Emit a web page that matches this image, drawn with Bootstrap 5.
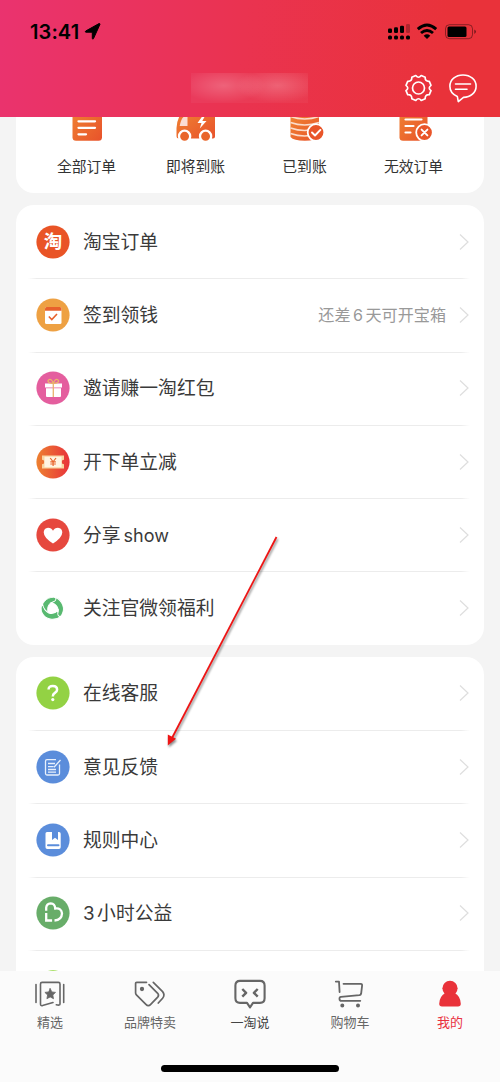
<!DOCTYPE html>
<html lang="zh-CN">
<head>
<meta charset="utf-8">
<meta name="viewport" content="width=device-width, initial-scale=1">
<title>我的</title>
<link href="https://cdn.jsdelivr.net/npm/bootstrap@5.3.0/dist/css/bootstrap.min.css" rel="stylesheet">
<style>
body{font-family:Inter,"Noto Sans CJK SC",sans-serif;background:#f4f4f4;color:#333;}
.screen{width:500px;height:1082px;}
.top-area{height:117px;background:linear-gradient(98deg,#ea336f 0%,#ea3350 48%,#e9323a 88%);}
.status-row{height:63px;padding:0 23px 0 30px;}
.clock{font-size:20px;font-weight:600;color:#000;line-height:1;letter-spacing:.1px;padding-top:1px;}
.title-row{height:54px;padding:0 22px 4px 191px;}
.title-blur{width:117px;height:30px;background:radial-gradient(ellipse 42px 17px at 28% 42%,rgba(255,255,255,.2),transparent),radial-gradient(ellipse 42px 17px at 74% 42%,rgba(255,255,255,.2),transparent),rgba(255,255,255,.045);}
.content{padding:0 16px;min-height:0;}
.panel{border:0;border-radius:18px;background:#fff;}
.panel + .panel{margin-top:12px;}
.orders{height:76px;padding:0 16px;border-radius:0 0 18px 18px;}
.orders span{font-size:14.8px;line-height:20px;margin-top:16px;}
.entry{height:73.3px;padding:0 14px 0 19.5px;font-size:18.8px;line-height:28px;color:#3a3a3a;border:0;background:transparent;}
.entry + .entry{background:linear-gradient(90deg,transparent,#ececec 2%,#ececec 98%,transparent) 12px 0/442px 1px no-repeat;}
.entry .name{margin-left:13.5px;padding-top:2px;}
.gap-latin{margin-left:3px;font-size:18px;}
.hint{font-size:16.1px;color:#999;margin-right:12px;padding-top:1px;}
.bottom-bar{height:111px;background:#fbfbfb;}
.tab{width:100px;padding-top:8px;font-size:13px;line-height:18px;color:#666;}
.tab span{margin-top:4px;}
.tab.talk{color:#444}.tab.active{color:#e9323f}
.home-line{width:178px;height:6.5px;background:#000;margin-bottom:10.5px;}
svg{display:block;flex:none}
.pointer-arrow{left:155px;top:525px;filter:drop-shadow(1px 2px 1px rgba(0,0,0,.45));}
</style>
</head>
<body>
<svg width="0" height="0" class="position-absolute"><defs>
  <linearGradient id="amber" x1="0" y1="0" x2="1" y2="1"><stop stop-color="#f08532"/><stop offset="1" stop-color="#e8522b"/></linearGradient>
  <linearGradient id="flame"><stop stop-color="#ed8130"/><stop offset="1" stop-color="#e8323b"/></linearGradient>
  <path id="chev" d="m2 1.500 8 7.500-8 7.500" fill="none" stroke="#dedede" stroke-width="1.200"/>
  <path id="blade" d="M-11 3C-12-5-6-11.500 1-11.200Q6.500-11 9-6.300 3-8.500-2-5.500-6-2-4.500 4-9-.5-11 3z"/>
</defs></svg>
<div class="screen position-relative d-flex flex-column overflow-hidden">
<header class="top-area flex-shrink-0">
  <div class="status-row d-flex align-items-center justify-content-between">
    <div class="d-flex align-items-center">
      <span class="clock">13:41</span>
      <svg style="margin-left:5px" width="17" height="17" viewBox="0 0 17 17"><path d="M16 1.200 9.500 15.600q-.8 1.200-1.200-.2V9.200H1.900q-1.300-.4-.2-1.200L15 .6q1-.2 1 .6z" stroke="#000" stroke-linejoin="round"/></svg>
    </div>
    <svg width="92" height="18" viewBox="0 0 92 18">
      <g><rect x="3" y="5.500" width="4" height="4.500" rx="1.300"/><rect x="9" y="4.200" width="4" height="5.800" rx="1.300"/><rect x="15" y="2.800" width="4" height="7.200" rx="1.300"/><rect x="21" y="1" width="4" height="9" rx="1.300" opacity=".25"/>
      <rect x="3" y="12.500" width="4" height="4" rx="1.500"/><rect x="9" y="12.500" width="4" height="4" rx="1.500"/><rect x="15" y="12.500" width="4" height="4" rx="1.500"/><rect x="21" y="12.500" width="4" height="4" rx="1.500"/></g>
      <g fill="none" stroke="#000" stroke-width="2.900"><path d="M32.800 6.200Q42 -2 51.200 6.200"/><path d="M36 10Q42 4.800 48 10"/></g><path d="M38.700 12.700Q42 10 45.300 12.700L42 16z"/>
      <rect x="60.500" y="1.700" width="27" height="14" rx="4" fill="none" stroke="#000" stroke-opacity=".4"/><rect x="62.500" y="3.500" width="19" height="10.500" rx="1.500"/><path d="M89.300 6.500q3.400 2.200 0 4.400z" opacity=".5"/>
    </svg>
  </div>
  <div class="title-row d-flex align-items-center">
    <div class="title-blur"></div>
    <div class="d-flex ms-auto align-items-center gap-3">
      <svg width="28" height="28" viewBox="-14.500 -14 28 28" fill="none" stroke="#fff" stroke-width="1.700" stroke-linejoin="round"><circle r="6"/><path d="M-2.700-12.500Q0-9 2.700-12.500L6.700-10.800Q6.400-6.400 10.800-6.700L12.500-2.700Q9 0 12.500 2.700L10.800 6.700Q6.400 6.400 6.700 10.800L2.700 12.500Q0 9-2.700 12.500L-6.700 10.800Q-6.400 6.400-10.800 6.700L-12.500 2.700Q-9 0-12.500-2.700L-10.800-6.700Q-6.400-6.400-6.700-10.800Z"/></svg>
      <svg width="30" height="30" viewBox="0 0 30 30" fill="none" stroke="#fff" stroke-width="1.600" stroke-linejoin="round" stroke-linecap="round"><path d="M9.300 23.400C4.800 21.500 1.900 17.500 1.900 13.200 1.900 6.800 7.500 2 15 2s13.100 4.800 13.100 11.200S22.500 24.400 15.500 24.400L10.300 28.600Z"/><path d="M7.500 11h15M7.500 16.200h11.500"/></svg>
    </div>
  </div>
</header>

<main class="content flex-grow-1 overflow-hidden">
  <section class="panel orders d-flex">
    <div class="flex-fill w-25 d-flex flex-column align-items-center">
      <svg width="44" height="24" viewBox="0 0 44 24"><rect x="7.500" y="-12" width="29.500" height="35.700" rx="3.500" fill="url(#amber)"/><path d="M13.500 4.300h16.500M13.500 10.800h16.500M13.500 17.300h7.500" stroke="#fff" stroke-width="2.300" stroke-linecap="round"/></svg>
      <span>全部订单</span></div>
    <div class="flex-fill w-25 d-flex flex-column align-items-center">
      <svg width="44" height="24" viewBox="0 0 44 24"><path d="M15-8H38q3 0 3 3V19.500q0 2-2 2H5q-2.500 0-2.500-2.500V11Q3 2 7-3 9-8 15-8z" fill="url(#amber)"/><path d="M13.500 0V9H5.700Q7 2 9.500 0z" fill="#fbdcd2"/><path d="M28.500-1 23.500 6h4l-1.700 5.500L32.500 4h-4.200L31-1z" fill="#fff"/><g fill="#e9662c" stroke="#fff" stroke-width="2.300"><circle cx="10.600" cy="19.300" r="5.600"/><circle cx="31.600" cy="19.300" r="5.600"/></g></svg>
      <span>即将到账</span></div>
    <div class="flex-fill w-25 d-flex flex-column align-items-center">
      <svg width="44" height="24" viewBox="0 0 44 24"><path d="M7.500-2H36V20q-3 3.800-14.200 3.800T7.500 20z" fill="url(#amber)"/><path d="M7.500-.5q14 5 28.500 0M7.500 5.500q14 5 28.500 0M7.500 11q14 5 28.500 0M7.500 16.500q14 5 28.500 0" fill="none" stroke="#fbdccb" stroke-width="1.700"/><circle cx="33" cy="15.500" r="8.300" fill="#e95529" stroke="#fff" stroke-width="1.800"/><path d="m29 15.500 3 3 5.400-5.600" fill="none" stroke="#fff" stroke-width="1.900" stroke-linecap="round" stroke-linejoin="round"/></svg>
      <span>已到账</span></div>
    <div class="flex-fill w-25 d-flex flex-column align-items-center">
      <svg width="44" height="24" viewBox="0 0 44 24"><rect x="7.500" y="-12" width="28" height="35.700" rx="3.500" fill="url(#amber)"/><path d="M13.500 2.500h16M13.500 9h8M13.500 15.500h5" stroke="#fff" stroke-width="2.200" stroke-linecap="round"/><circle cx="32.500" cy="15.500" r="8.300" fill="#e95529" stroke="#fff" stroke-width="1.800"/><path d="m29.600 12.600 5.800 5.800m0-5.800-5.800 5.800" stroke="#fff" stroke-width="1.900" stroke-linecap="round"/></svg>
      <span>无效订单</span></div>
  </section>

  <section class="panel list-group">
    <div class="entry list-group-item d-flex align-items-center"><svg width="34" height="34"><circle cx="17" cy="17" r="16.600" fill="#e95426"/><text x="17" y="23.400" font-size="18.500" font-weight="700" fill="#fff" text-anchor="middle" font-family="Noto Sans CJK SC">淘</text></svg><span class="name">淘宝订单</span><svg class="ms-auto" width="12" height="18"><use href="#chev"/></svg></div>
    <div class="entry list-group-item d-flex align-items-center"><svg width="34" height="34"><circle cx="17" cy="17" r="16.600" fill="#eea143"/><rect x="9" y="9" width="16.500" height="17" rx="1.500" fill="#fff"/><path d="M9 12.700V10.500Q9 9 10.500 9H24q1.500 0 1.500 1.500v2.200z" fill="#e8612c"/><path d="m12.800 18.500 3 3 5.200-5.500" fill="none" stroke="#e8612c" stroke-width="1.600"/></svg><span class="name">签到领钱</span><span class="hint ms-auto">还差<span style="margin:0 2.500px">6</span>天可开宝箱</span><svg width="12" height="18"><use href="#chev"/></svg></div>
    <div class="entry list-group-item d-flex align-items-center"><svg width="34" height="34"><circle cx="17" cy="17" r="16.600" fill="#e45e9e"/><path d="M9 12.500h17v4H9zM10 17.300h15V25q0 1-1 1H11q-1 0-1-1z" fill="#fff"/><path d="M17.300 26V12.500C13 12.500 10.800 10.500 12.600 8.900s4 .5 4.700 3.600c.7-3.100 2.900-5.200 4.700-3.600s-.4 3.600-4.700 3.600" fill="none" stroke="#e9b36d" stroke-width="1.300"/></svg><span class="name">邀请赚一淘红包</span><svg class="ms-auto" width="12" height="18"><use href="#chev"/></svg></div>
    <div class="entry list-group-item d-flex align-items-center"><svg width="34" height="34"><circle cx="17" cy="17" r="16.600" fill="url(#flame)"/><path d="M6 10.500h22v4.200a2.300 2.300 0 0 0 0 4.600v4.200H6v-4.200a2.300 2.300 0 0 0 0-4.600z" fill="#f9d5a1"/><path d="M8.500 11.700h17v10.600h-17z" fill="#fff4e2"/><path d="m14.200 13 2.900 3.800L20 13M17.100 16.800V21M14.300 16.800h5.600M14.300 19h5.600" stroke="#e9672f" stroke-width="1.200" fill="none"/></svg><span class="name">开下单立减</span><svg class="ms-auto" width="12" height="18"><use href="#chev"/></svg></div>
    <div class="entry list-group-item d-flex align-items-center"><svg width="34" height="34"><circle cx="17" cy="17" r="16.600" fill="#e6483e"/><path d="M17 25.500Q7.700 19.500 7.700 14.200 8 10 12 9.700q3.500 0 5 3 1.500-3 5-3 4 .3 4.300 4.500 0 5.300-9.300 11.300z" fill="#fff"/></svg><span class="name">分享<span class="gap-latin">show</span></span><svg class="ms-auto" width="12" height="18"><use href="#chev"/></svg></div>
    <div class="entry list-group-item d-flex align-items-center"><svg width="34" height="34"><g transform="translate(16.500 17.500)" fill="#58b970" stroke="#fff" stroke-width=".9"><use href="#blade"/><use href="#blade" transform="rotate(120)"/><use href="#blade" transform="rotate(240)"/></g></svg><span class="name">关注官微领福利</span><svg class="ms-auto" width="12" height="18"><use href="#chev"/></svg></div>
  </section>

  <section class="panel list-group">
    <div class="entry list-group-item d-flex align-items-center"><svg width="34" height="34"><circle cx="17" cy="17" r="16.600" fill="#93d244"/><path d="M12.600 13.500Q12.500 10 16.800 10t4.300 3.700q0 1.800-2.200 3.200-2.100 1.300-2.100 3.500" fill="none" stroke="#fff" stroke-width="2.500"/><circle cx="16.800" cy="23.600" r="1.600" fill="#fff"/></svg><span class="name">在线客服</span><svg class="ms-auto" width="12" height="18"><use href="#chev"/></svg></div>
    <div class="entry list-group-item d-flex align-items-center"><svg width="34" height="34"><circle cx="17" cy="17" r="16.600" fill="#5b8ddb"/><g fill="none" stroke="#e8f0fc" stroke-width="1.300"><path d="M20 9.700H11q-1.500 0-1.500 1.500v12.300q0 1.500 1.500 1.500h11q1.500 0 1.500-1.500V14.500M12 13.500h7M12 16.700h5.500M12 19.500h8M12 22.200h8M18 17.200l6.500-7.200"/></g></svg><span class="name">意见反馈</span><svg class="ms-auto" width="12" height="18"><use href="#chev"/></svg></div>
    <div class="entry list-group-item d-flex align-items-center"><svg width="34" height="34"><circle cx="17" cy="17" r="16.600" fill="#5b8ddb"/><path d="M11 9h5v8l3-2.200 3 2.200V9h1q1.700 0 1.700 1.700v13.600q0 1.700-1.700 1.700H11.300q-1.800 0-1.800-1.800V10.500Q9.500 9 11 9z" fill="#fff"/><rect x="11" y="21.300" width="12.500" height="2" rx="1" fill="#5b8ddb"/></svg><span class="name">规则中心</span><svg class="ms-auto" width="12" height="18"><use href="#chev"/></svg></div>
    <div class="entry list-group-item d-flex align-items-center"><svg width="34" height="34"><circle cx="17" cy="17" r="16.600" fill="#68ad69"/><g fill="none" stroke="#fff" stroke-width="2.300"><path d="M10.200 14.700V11.700q.3-4.200 4.500-4.400 4.300.2 4.500 5.200 6.300-.8 6.800 4.900-.3 6.700-7.500 7.100"/><path d="M10.200 17v7.500h5.900"/></g></svg><span class="name"><span style="margin-right:2.500px">3</span>小时公益</span><svg class="ms-auto" width="12" height="18"><use href="#chev"/></svg></div>
    <div class="entry list-group-item d-flex align-items-center"><svg width="34" height="34"><circle cx="17" cy="17" r="16.800" fill="#8fd63a"/></svg></div>
  </section>
</main>

<footer class="bottom-bar flex-shrink-0 d-flex flex-column justify-content-between align-items-center">
  <nav class="d-flex">
    <div class="tab d-flex flex-column align-items-center"><svg width="34" height="30" viewBox="0 0 34 30" fill="none" stroke="#666" stroke-width="1.600" stroke-linecap="round" stroke-linejoin="round"><path d="M3 5.500v18M30.700 5.500v18M20 23.500 9.500 26.600q-2 .5-2-1.500V5q0-1.600 1.600-1.600h16.300Q27 3.400 27 5v20q0 1.700-3.700.8"/><path d="m17.200 9.600 1.600 3.300 3.700.5-2.700 2.600.7 3.700-3.300-1.800-3.300 1.800.7-3.700-2.700-2.600 3.700-.5z" fill="#666" stroke-width=".8"/></svg><span>精选</span></div>
    <div class="tab d-flex flex-column align-items-center"><svg width="34" height="30" viewBox="0 0 34 30" fill="none" stroke="#666" stroke-width="1.700" stroke-linecap="round" stroke-linejoin="round"><path d="M13.500 3.300H3.800Q2.600 3.300 2.600 4.600V14q0 1 .8 1.800l9.500 9.600q2.400 2.400 4.800 0l7-7.300q1.600-1.900 0-3.800L16 5.600M20.300 3.400l9.300 9.200q2.700 3.300 0 6.600L25.300 24"/><circle cx="9" cy="10" r="1.300" fill="#666"/></svg><span>品牌特卖</span></div>
    <div class="tab talk d-flex flex-column align-items-center"><svg width="34" height="30" viewBox="0 0 34 30" fill="none" stroke="#666" stroke-width="2.100" stroke-linecap="round" stroke-linejoin="round"><path d="M7 1.900h20q4.600 0 4.600 4.600v12.800q0 4.600-4.600 4.600h-7L17 28.300 14 23.900H7q-4.600 0-4.600-4.600V6.500Q2.400 1.900 7 1.900z"/><path d="m9.300 10 3.800 3.800-3.800 3.800M24.700 10l-3.800 3.800 3.800 3.800" stroke-linecap="butt" stroke-width="2.400"/></svg><span>一淘说</span></div>
    <div class="tab d-flex flex-column align-items-center"><svg width="34" height="30" viewBox="0 0 34 30" fill="none" stroke="#666" stroke-width="1.800" stroke-linecap="round" stroke-linejoin="round"><path d="M2.800 2.600H6L6.600 13M10.500 4.800h17.300q1.500.2 1.300 1.800l-1 8.200q-.3 1.200-1.700 1.400L8 17.900q-1.800.3-1.500 2 0 1.900 2 1.900h18.800"/><circle cx="9.300" cy="26.500" r="1.100" fill="#666"/><circle cx="25" cy="26.500" r="1.100" fill="#666"/></svg><span>购物车</span></div>
    <div class="tab active d-flex flex-column align-items-center"><svg width="34" height="30" viewBox="0 0 34 30" fill="#e9323a"><circle cx="17" cy="9.300" r="7.600"/><path d="M12.500 14q4.500 2.500 9 0 6 3 6.300 10.800 0 2.600-2.800 2.600H9q-2.800 0-2.800-2.600Q6.500 17 12.500 14z"/></svg><span>我的</span></div>
  </nav>
  <div class="home-line rounded-pill"></div>
</footer>

<svg class="pointer-arrow position-absolute" width="135" height="235" viewBox="155 525 135 235"><path d="M276.500 537 171 740" stroke="#ee1515" stroke-width="1.800"/><path d="M167.800 745.500V734.500l8.200 4.200z" fill="#ee1515"/></svg>
</div>
<script src="https://cdn.jsdelivr.net/npm/bootstrap@5.3.0/dist/js/bootstrap.bundle.min.js"></script>
</body>
</html>
